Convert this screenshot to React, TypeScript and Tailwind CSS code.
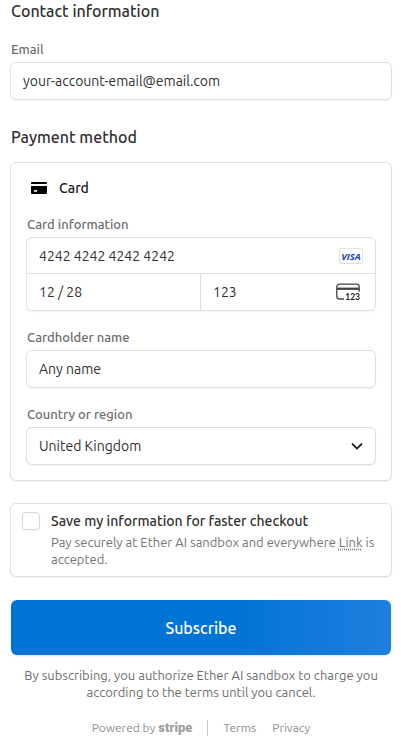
import type { ReactNode } from "react";

const COUNTRIES = ["United Kingdom"];

const INPUT_CLASS =
  "w-full min-w-0 bg-transparent px-3 text-sm text-[#303030] outline-none";
const BOX_CLASS = "rounded-md border border-[#e0e0e0] bg-white shadow-xs";

type FieldProps = {
  id: string;
  label: string;
  children: ReactNode;
};

function Field({ id, label, children }: FieldProps) {
  return (
    <div>
      <label
        htmlFor={id}
        className="mb-[5px] block px-px text-[13px] leading-4 font-medium text-[#6d6d6d]"
      >
        {label}
      </label>
      {children}
    </div>
  );
}

function TextField({
  id,
  label,
  value,
}: {
  id: string;
  label: string;
  value: string;
}) {
  return (
    <Field id={id} label={label}>
      <div className={`flex h-[38px] ${BOX_CLASS}`}>
        <input id={id} defaultValue={value} className={INPUT_CLASS} />
      </div>
    </Field>
  );
}

function CardIcon() {
  return (
    <svg width="16" height="12" viewBox="0 0 16 12" aria-hidden="true">
      <path d="M0 2V1a1 1 0 0 1 1-1h14a1 1 0 0 1 1 1v1z" />
      <path
        fillRule="evenodd"
        d="M0 4h16v7a1 1 0 0 1-1 1H1a1 1 0 0 1-1-1zm3.8 4a.8.8 0 0 0 0 1.8h1.4a.8.8 0 0 0 0-1.8z"
      />
    </svg>
  );
}

function VisaIcon() {
  return (
    <svg
      width="24"
      height="16"
      viewBox="0 0 24 16"
      role="img"
      aria-label="Visa"
      className="shrink-0"
    >
      <rect x=".5" y=".5" width="23" height="15" rx="1.5" fill="#fff" stroke="#e0e0e0" />
      <text
        x="12"
        y="11.5"
        textAnchor="middle"
        fill="#1a3fd6"
        fontSize="9.5"
        fontWeight="700"
        fontStyle="italic"
        fontFamily="'Open Sans', sans-serif"
      >
        VISA
      </text>
    </svg>
  );
}

function CvcIcon() {
  return (
    <svg
      width="24"
      height="18"
      viewBox="0 0 24 18"
      aria-hidden="true"
      className="shrink-0"
    >
      <path
        d="M8 16H3.5A2.7 2.7 0 0 1 .8 13.3V3.8A2.7 2.7 0 0 1 3.5 1.1h17a2.7 2.7 0 0 1 2.7 2.7v5"
        fill="none"
        stroke="#444"
        strokeWidth="1.3"
      />
      <path d="M1 4.6h22v2.3H1z" fill="#444" />
      <text
        x="24"
        y="16.8"
        textAnchor="end"
        fill="#222"
        fontSize="8.5"
        fontWeight="700"
        fontFamily="Lato, sans-serif"
      >
        123
      </text>
    </svg>
  );
}

function ChevronIcon() {
  return (
    <svg
      width="12"
      height="8"
      viewBox="0 0 12 8"
      fill="none"
      stroke="#1a1a1a"
      strokeWidth="1.8"
      aria-hidden="true"
      className="pointer-events-none absolute top-1/2 right-3 -translate-y-1/2"
    >
      <path d="M1 1.6l5 5 5-5" />
    </svg>
  );
}

function CardFields() {
  return (
    <Field id="card-number" label="Card information">
      <div className={BOX_CLASS}>
        <div className="flex h-9 items-center border-b border-[#e0e0e0] pr-3">
          <input
            id="card-number"
            defaultValue="4242 4242 4242 4242"
            className={INPUT_CLASS}
          />
          <VisaIcon />
        </div>
        <div className="grid h-9 grid-cols-2">
          <div className="flex border-r border-[#e0e0e0]">
            <input
              aria-label="Expiration"
              defaultValue="12 / 28"
              className={INPUT_CLASS}
            />
          </div>
          <div className="flex items-center pr-[15px]">
            <input aria-label="CVC" defaultValue="123" className={INPUT_CLASS} />
            <CvcIcon />
          </div>
        </div>
      </div>
    </Field>
  );
}

function SectionTitle({ children }: { children: ReactNode }) {
  return (
    <h2 className="px-px text-base leading-[22px] font-medium text-[#303030]">
      {children}
    </h2>
  );
}

export default function App() {
  return (
    <form
      className="bg-white pr-[9px] pl-[10px] font-['Ubuntu','Noto_Sans',sans-serif]"
      onSubmit={(e) => e.preventDefault()}
    >
      <SectionTitle>Contact information</SectionTitle>
      <div className="mt-[19px] mb-[26px]">
        <TextField id="email" label="Email" value="your-account-email@email.com" />
      </div>

      <SectionTitle>Payment method</SectionTitle>
      <section className={`mt-[14px] p-[15px] ${BOX_CLASS}`}>
        <div className="flex items-center gap-3 px-[5px]">
          <CardIcon />
          <span className="text-sm font-medium text-[#1a1a1a]">Card</span>
        </div>
        <div className="mt-[18px] flex flex-col gap-[18px]">
          <CardFields />
          <TextField id="name" label="Cardholder name" value="Any name" />
          <Field id="country" label="Country or region">
            <div className={`relative flex h-[38px] ${BOX_CLASS}`}>
              <select id="country" className={`appearance-none ${INPUT_CLASS}`}>
                {COUNTRIES.map((country) => (
                  <option key={country}>{country}</option>
                ))}
              </select>
              <ChevronIcon />
            </div>
          </Field>
        </div>
      </section>

      <div
        className={`mt-[22px] flex gap-[11px] px-[11px] pt-[7px] pb-2 ${BOX_CLASS}`}
      >
        <input
          id="save"
          type="checkbox"
          className="mt-px size-[18px] shrink-0 appearance-none rounded-sm border border-[#d8d8d8] bg-white shadow-xs"
        />
        <div>
          <label htmlFor="save" className="block text-sm font-medium text-[#303030]">
            Save my information for faster checkout
          </label>
          <p className="mt-[3px] text-[13px] leading-[17px] text-[#747474]">
            Pay securely at Ether AI sandbox and everywhere{" "}
            <a href="#link" className="underline decoration-dotted underline-offset-2">
              Link
            </a>{" "}
            is accepted.
          </p>
        </div>
      </div>

      <div className="mt-[23px] px-px">
        <button
          type="submit"
          className="block h-[55px] w-full rounded-md bg-linear-to-r from-[#0074d4] from-60% to-[#1d7fe0] text-base font-medium text-white shadow-sm"
        >
          Subscribe
        </button>
      </div>
      <p className="mt-3 text-center text-[13px] leading-[17px] text-[#6d6d6d]">
        By subscribing, you authorize Ether AI sandbox to charge you according to
        the terms until you cancel.
      </p>

      <footer className="mt-[19px] flex items-center justify-center text-xs text-[#8c8c8c]">
        <a href="#stripe" className="flex items-center gap-[3px]">
          Powered by
          <span className="font-['Roboto',sans-serif] text-[13px] leading-4 font-black text-[#a0a0a0]">
            stripe
          </span>
        </a>
        <div className="mx-[15px] h-4 w-px bg-[#c9c9c9]" />
        <a href="#terms" className="mr-4">
          Terms
        </a>
        <a href="#privacy">Privacy</a>
      </footer>
    </form>
  );
}
